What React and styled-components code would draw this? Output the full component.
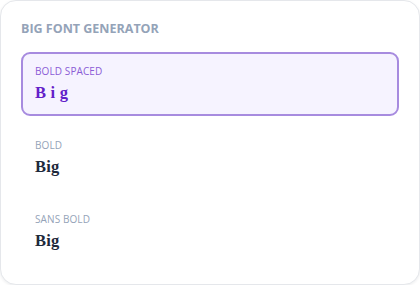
import React from "react";
import styled, { createGlobalStyle } from "styled-components";

const Global = createGlobalStyle`
  html, body {
    margin: 0;
    padding: 0;
    background: #ffffff;
  }
  * {
    box-sizing: border-box;
  }
`;

const Card = styled.section`
  width: 420px;
  height: 285px;
  background: #fff;
  border: 1px solid #e5e7eb;
  border-radius: 16px;
  box-shadow: 0 1px 3px rgba(15, 23, 42, 0.08);
  padding: 19px 20px 18px 20px;
  display: flex;
  flex-direction: column;
  font-family: "Open Sans", "Noto Sans", sans-serif;
`;

const Title = styled.h2`
  margin: 0 0 14px 0;
  font-size: 12.5px;
  line-height: 18px;
  font-weight: 700;
  color: #94a3b8;
`;

const List = styled.div`
  display: flex;
  flex-direction: column;
  gap: 10px;
`;

const Item = styled.div`
  height: 64px;
  padding: 10px 12px 0 12px;
  border: 2px solid ${(p) => (p.$active ? "#a78bdf" : "transparent")};
  border-radius: 9px;
  background: ${(p) => (p.$active ? "#f6f3ff" : "transparent")};
  display: flex;
  flex-direction: column;
  gap: 4px;
`;

const Label = styled.div`
  font-size: 10px;
  line-height: 14px;
  font-weight: 500;
  letter-spacing: 0.1px;
  color: ${(p) => (p.$active ? "#8b5cd6" : "#94a3b8")};
`;

const Sample = styled.div`
  font-family: "Liberation Serif", "Times New Roman", serif;
  font-weight: 700;
  font-size: 16.5px;
  line-height: 22px;
  letter-spacing: 0.2px;
  color: ${(p) => (p.$active ? "#6320c9" : "#1e293b")};
`;

const styles = [
  { name: "BOLD SPACED", text: "B i g" },
  { name: "BOLD", text: "Big" },
  { name: "SANS BOLD", text: "Big" },
];

export default function App() {
  return (
    <>
      <Global />
      <Card>
        <Title>BIG FONT GENERATOR</Title>
        <List>
          {styles.map((s, i) => (
            <Item key={s.name} $active={i === 0}>
              <Label $active={i === 0}>{s.name}</Label>
              <Sample $active={i === 0}>{s.text}</Sample>
            </Item>
          ))}
        </List>
      </Card>
    </>
  );
}
